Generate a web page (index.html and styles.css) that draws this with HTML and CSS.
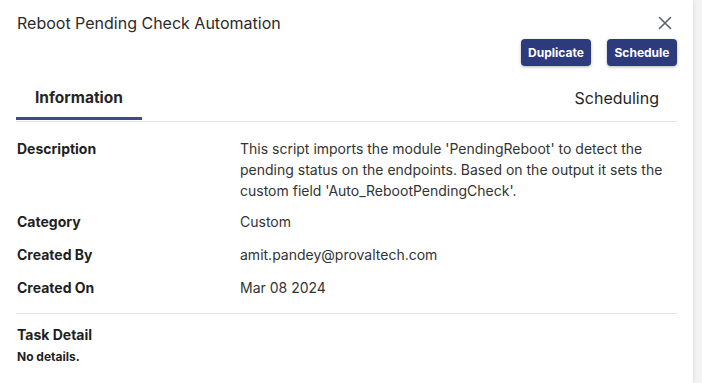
FILE: index.html
```html
<!DOCTYPE html>
<html lang="en">
<head>
<meta charset="utf-8">
<title>Reboot Pending Check Automation</title>
<link rel="stylesheet" href="styles.css">
</head>
<body>
<div class="page">
  <div class="panel">
    <div class="header">
      <h1 class="title">Reboot Pending Check Automation</h1>
      <button class="close" aria-label="Close">
        <svg width="14" height="14" viewBox="0 0 14 14"><path d="M1.5 1.5 L12.5 12.5 M12.5 1.5 L1.5 12.5" stroke="#5f6368" stroke-width="1.6" fill="none" stroke-linecap="round"/></svg>
      </button>
    </div>
    <div class="actions">
      <button class="btn">Duplicate</button>
      <button class="btn">Schedule</button>
    </div>
    <div class="tabs">
      <div class="tab active">Information</div>
      <div class="tab">Scheduling</div>
    </div>
    <div class="info">
      <div class="row">
        <div class="label">Description</div>
        <div class="value">This script imports the module 'PendingReboot' to detect the pending status on the endpoints. Based on the output it sets the custom field 'Auto_RebootPendingCheck'.</div>
      </div>
      <div class="row">
        <div class="label">Category</div>
        <div class="value">Custom</div>
      </div>
      <div class="row">
        <div class="label">Created By</div>
        <div class="value">amit.pandey@provaltech.com</div>
      </div>
      <div class="row">
        <div class="label">Created On</div>
        <div class="value">Mar 08 2024</div>
      </div>
    </div>
    <div class="task">
      <div class="task-title">Task Detail</div>
      <div class="task-body">No details.</div>
    </div>
  </div>
  <div class="side"></div>
</div>
</body>
</html>
```
FILE: styles.css
```css
* { box-sizing: border-box; }
html, body { margin: 0; padding: 0; }
body {
  font-family: Inter, "Noto Sans", "Liberation Sans", sans-serif;
  background: #f4f4f4;
  width: 702px;
  height: 383px;
  overflow: hidden;
}
.page {
  display: flex;
  height: 383px;
}
.panel {
  width: 693px;
  height: 383px;
  background: #ffffff;
  box-shadow: 1px 0 4px rgba(0,0,0,0.09);
  padding: 0 16px 0 16px;
  position: relative;
  z-index: 1;
}
.side {
  flex: 1;
  background: #f4f4f4;
}
.header {
  display: flex;
  justify-content: space-between;
  align-items: center;
  height: 46px;
  padding: 0 4px 0 1px;
}
.title {
  margin: 0;
  font-size: 16px;
  font-weight: 400;
  color: #2b2b2b;
  line-height: 20px;
  margin-top: -1px;
}
.close {
  border: 0;
  background: transparent;
  padding: 0;
  width: 14px;
  height: 14px;
  display: flex;
  margin-top: 0;
  margin-right: 1px;
}
.actions {
  display: flex;
  justify-content: flex-end;
  gap: 16px;
  margin-top: -7px;
}
.btn {
  font-family: Inter, "Noto Sans", "Liberation Sans", sans-serif;
  background: #2d3a7c;
  color: #ffffff;
  border: 0;
  border-radius: 4px;
  height: 27px;
  width: 70px;
  font-size: 12px;
  font-weight: 700;
  box-shadow: 0 1px 3px rgba(0,0,0,0.3);
  padding: 0;
}
.tabs {
  display: flex;
  justify-content: space-between;
  border-bottom: 1px solid #e3e3e3;
  margin-top: 9px;
}
.tab {
  font-size: 16px;
  color: #262626;
  height: 46px;
  padding: 14px 19px 0;
  line-height: 18px;
}
.tab.active {
  font-size: 15.5px;
  font-weight: 700;
  border-bottom: 3px solid #3d4a8e;
  width: 126px;
  height: 45px;
  margin-bottom: -1px;
}
.tab:last-child {
  padding-right: 18px;
}
.info {
  padding: 16px 0 15px 1px;
  display: flex;
  flex-direction: column;
  gap: 12px;
  border-bottom: 1px solid #e3e3e3;
}
.row {
  display: flex;
  font-size: 14px;
  line-height: 21px;
}
.row:first-child { margin-bottom: -2px; }
.label {
  width: 223px;
  font-weight: 700;
  color: #1f1f1f;
  flex: none;
}
.value {
  width: 438px;
  color: #333333;
}
.task {
  padding: 11px 0 0 1px;
}
.task-title {
  font-size: 14px;
  font-weight: 700;
  color: #1f1f1f;
  line-height: 20px;
}
.task-body {
  font-size: 12px;
  font-weight: 700;
  color: #1f1f1f;
  line-height: 16px;
  margin-top: 4px;
}
```
